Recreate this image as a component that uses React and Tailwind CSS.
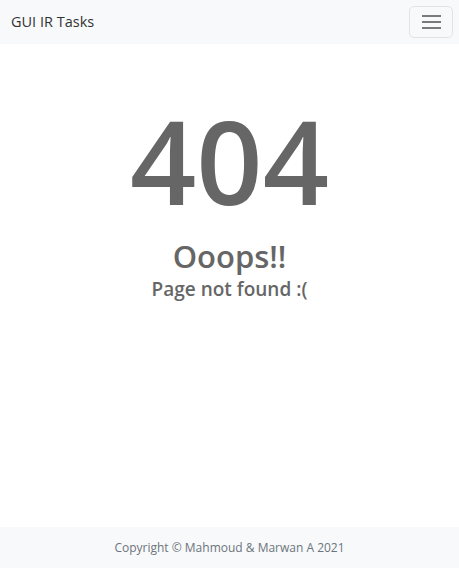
export default function App() {
  return (
    <div className="flex min-h-[568px] flex-col bg-white" style={{ fontFamily: '"Open Sans", "Noto Sans", sans-serif' }}>
      <nav className="flex h-[44px] items-center justify-between bg-[#f8f9fa] pl-[11px] pr-[6px]">
        <span className="text-[14.5px] text-[#333]">GUI IR Tasks</span>
        <button className="flex h-[32px] w-[44px] flex-col items-center justify-center gap-[4px] rounded-[5px] border border-[#e2e3e5]">
          <span className="block h-[2px] w-[19px] bg-[#7a7a7a]"></span>
          <span className="block h-[2px] w-[19px] bg-[#7a7a7a]"></span>
          <span className="block h-[2px] w-[19px] bg-[#7a7a7a]"></span>
        </button>
      </nav>
      <main className="flex flex-1 flex-col items-center pt-[46px] text-[#666]">
        <div className="text-[116px] font-semibold leading-[140px]">404</div>
        <div className="mt-[6px] text-[31px] font-semibold leading-[40px]">Ooops!!</div>
        <div className="text-[19px] font-semibold leading-[26px]">Page not found :(</div>
      </main>
      <footer className="flex h-[41px] items-center justify-center bg-[#f8f9fa] text-[12px] text-[#6c757d]">
        Copyright © Mahmoud &amp; Marwan A 2021
      </footer>
    </div>
  );
}
